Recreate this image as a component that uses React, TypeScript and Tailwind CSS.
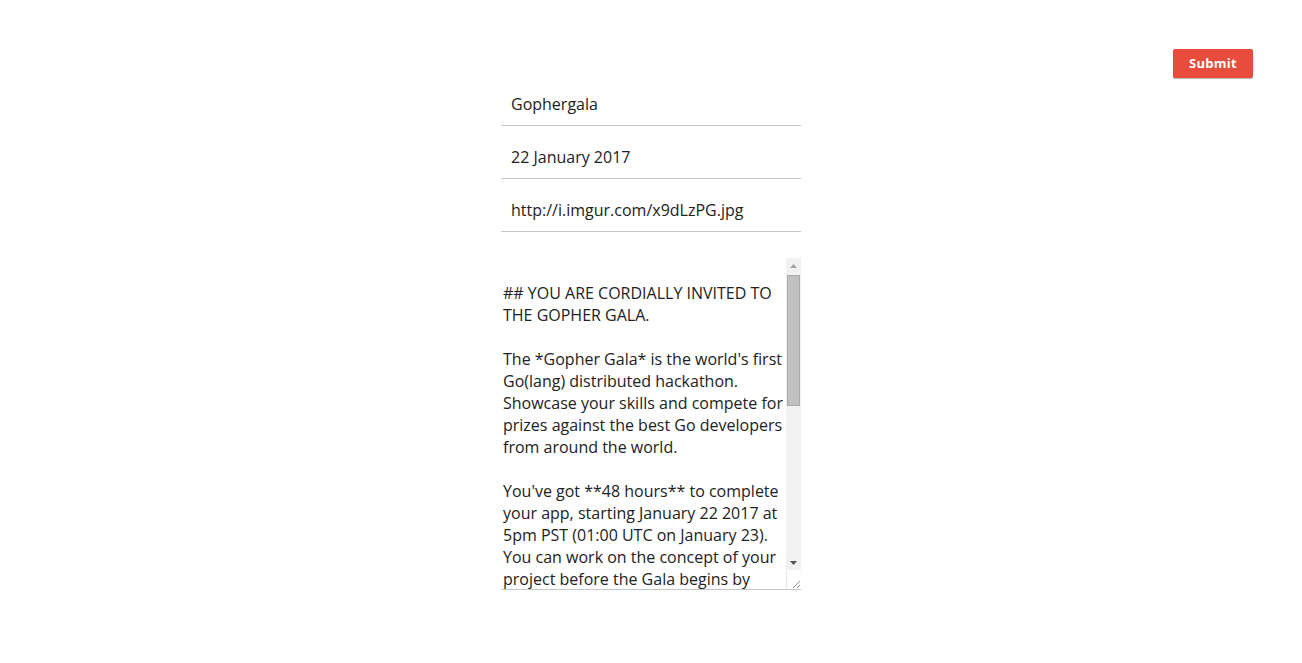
import React from "react";

const body = `
## YOU ARE CORDIALLY INVITED TO THE GOPHER GALA.

The *Gopher Gala* is the world's first Go(lang) distributed hackathon. Showcase your skills and compete for prizes against the best Go developers from around the world.

You've got **48 hours** to complete your app, starting January 22 2017 at 5pm PST (01:00 UTC on January 23). You can work on the concept of your project before the Gala begins by designing the UI, reading the docs and planning your architecture, but all code must be written during the event.

## HOW IT WORKS

Teams of up to 4 people compete to build the best application written in Go. At the end of the event, the judges will review the submissions and the winners will be announced.`;

export default function App() {
  return (
    <div
      className="grid min-h-[663px] w-full grid-cols-[1fr_300px_1fr] bg-white"
      style={{ fontFamily: '"Open Sans", sans-serif' }}
    >
      <div />
      <div className="flex flex-col pt-[73px]">
        <input
          defaultValue="Gophergala"
          className="h-[53px] w-full border-0 border-b border-[#c4c7ca] bg-transparent pl-[10px] pt-[10px] text-[16px] text-[#222] outline-none"
        />
        <input
          defaultValue="22 January 2017"
          className="h-[53px] w-full border-0 border-b border-[#c4c7ca] bg-transparent pl-[10px] pt-[10px] text-[16px] text-[#222] outline-none"
        />
        <input
          defaultValue="http://i.imgur.com/x9dLzPG.jpg"
          className="h-[53px] w-full border-0 border-b border-[#c4c7ca] bg-transparent pl-[10px] pt-[10px] text-[16px] text-[#222] outline-none"
        />
        <div className="relative mt-[26px] h-[332px] w-full">
          <textarea
            defaultValue={body}
            className="block h-full w-full resize-none overflow-y-scroll border-0 border-b border-[#c4c7ca] py-[2px] pl-[2px] pr-[17px] text-[16px] leading-[22px] text-[#222] outline-none [scrollbar-width:none] [&::-webkit-scrollbar]:hidden"
          />
          <div className="pointer-events-none absolute bottom-[1px] right-0 top-0 flex w-[15px] flex-col">
            <div className="flex h-[15px] items-center justify-center bg-[#f1f1f1]">
              <svg width="7" height="4" viewBox="0 0 7 4">
                <path d="M0 4 L3.5 0 L7 4 Z" fill="#a3a3a3" />
              </svg>
            </div>
            <div className="flex-1 bg-[#f1f1f1] px-[1px] pt-[2px]">
              <div className="h-[131px] w-full border border-[#a9a9a9] bg-[#c1c1c1]" />
            </div>
            <div className="flex h-[15px] items-center justify-center bg-[#f1f1f1]">
              <svg width="7" height="4" viewBox="0 0 7 4">
                <path d="M0 0 L7 0 L3.5 4 Z" fill="#505050" />
              </svg>
            </div>
            <div className="flex h-[19px] items-end justify-end border-l border-[#e6e6e6] bg-white">
              <svg width="12" height="12" viewBox="0 0 12 12">
                <path d="M11 4 L4 11 M11 8 L8 11" stroke="#8a8a8a" strokeWidth="1" />
              </svg>
            </div>
          </div>
        </div>
      </div>
      <div className="flex items-start justify-end pr-[49px] pt-[49px]">
        <button className="h-[29px] w-[80px] rounded-[2px] bg-[#e74c3c] text-[13px] font-bold tracking-[0.3px] text-white shadow-[0_1px_1px_rgba(0,0,0,0.3)]">
          Submit
        </button>
      </div>
    </div>
  );
}
